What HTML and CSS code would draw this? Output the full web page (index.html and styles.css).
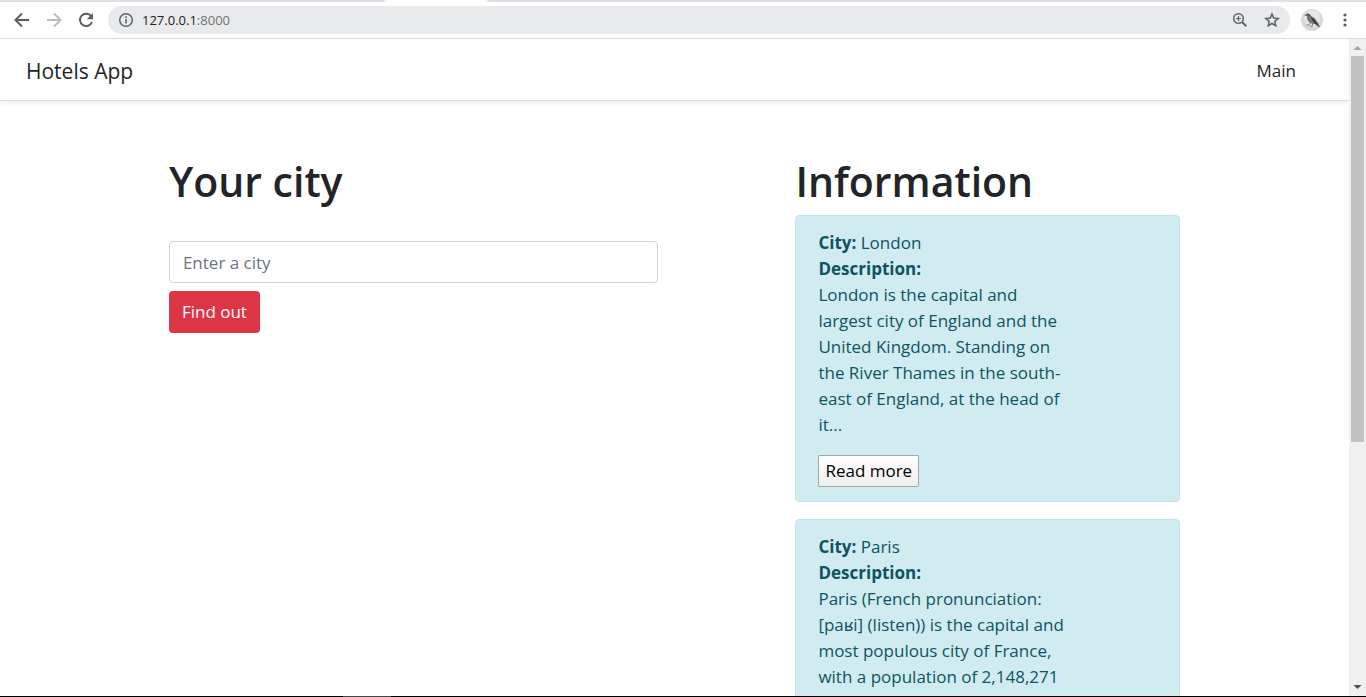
FILE: index.html
```html
<!DOCTYPE html>
<html lang="en">
<head>
<meta charset="utf-8">
<title>Hotels App</title>
<link rel="stylesheet" href="styles.css">
</head>
<body>
<div class="tabs"><span class="tab-rest tab-rest-left"></span><span class="tab-active"></span><span class="tab-rest tab-rest-right"></span></div>
<div class="toolbar">
  <button class="tool" aria-label="Back"><svg width="16" height="16" viewBox="0 0 16 16" fill="none" stroke="#5a5e63" stroke-width="2"><path d="M15 8H2M8 1.5 1.5 8 8 14.5"/></svg></button>
  <button class="tool" aria-label="Forward"><svg width="16" height="16" viewBox="0 0 16 16" fill="none" stroke="#babcbe" stroke-width="2"><path d="M1 8h13M8 1.5 14.5 8 8 14.5"/></svg></button>
  <button class="tool" aria-label="Reload"><svg width="16" height="16" viewBox="0 0 16 16"><path d="M13.2 4.2A6.2 6.2 0 1 0 14 10" fill="none" stroke="#5a5e63" stroke-width="2"/><path d="M15 1v6.2H8.8z" fill="#5a5e63"/></svg></button>
  <div class="address">
    <svg width="16" height="16" viewBox="0 0 16 16" fill="none" stroke="#5f6368"><circle cx="8" cy="8" r="6.3" stroke-width="1.5"/><path d="M8 7v4.5M8 4.2v1.7" stroke-width="1.6"/></svg>
    <span class="url">127.0.0.1<span class="port">:8000</span></span>
    <button class="tool" aria-label="Zoom"><svg width="16" height="16" viewBox="0 0 16 16" fill="none" stroke="#5f6368"><circle cx="6.5" cy="6.5" r="4.8" stroke-width="1.5"/><path d="m10 10 4.3 4.3" stroke-width="2"/><path d="M4 6.5h5M6.5 4v5" stroke-width="1.2"/></svg></button>
    <button class="tool" aria-label="Bookmark"><svg width="16" height="16" viewBox="0 0 16 16" fill="none" stroke="#5f6368" stroke-width="1.5"><path d="m8 2 1.7 4.1 4.5.4-3.4 2.9 1 4.4L8 11.5l-3.8 2.3 1-4.4-3.4-2.9 4.5-.4z"/></svg></button>
  </div>
  <button class="tool profile" aria-label="Profile"><svg width="22" height="22" viewBox="0 0 22 22"><circle cx="11" cy="11" r="11" fill="#d9d9d9"/><circle cx="11" cy="9" r="8" fill="#e6e6e6"/><path d="M2.800 6.200 5 5.200c.8-1.100 2.500-1.200 3.400-.2l1.600 1.800 3.600 2.400 3.200 4.200 2.400 4.600-1.400.2-3.400-3-2.400-.5-2.800-.8C7 12.500 5.700 10.500 5.900 7.200z" fill="#777"/><path d="m9.500 7.800 3.800 2.400 5 7.600-5-3.900z" fill="#333"/><path d="M5 5.600 8 5l1.500 2.200z" fill="#444"/><path d="m9.500 13.500-1.500 2.600H5.500m6.300-2-.6 3.200H9" fill="none" stroke="#666" stroke-width=".8"/></svg></button>
  <button class="tool menu" aria-label="Menu"><svg width="16" height="16" viewBox="0 0 16 16" fill="#5a5e63"><circle cx="8" cy="3" r="1.600"/><circle cx="8" cy="8" r="1.600"/><circle cx="8" cy="13" r="1.600"/></svg></button>
</div>
<div class="viewport">
  <div class="page">
    <header class="navbar">
      <a class="brand" href="#">Hotels App</a>
      <nav><a class="nav-link" href="#">Main</a></nav>
    </header>
    <main class="container">
      <section class="search">
        <h1>Your city</h1>
        <form>
          <input type="text" class="field" placeholder="Enter a city" aria-label="City">
          <button type="button" class="submit">Find out</button>
        </form>
      </section>
      <section class="info">
        <h1>Information</h1>
        <article class="card">
          <div class="card-text">
            <p><b>City:</b> London</p>
            <p><b>Description:</b></p>
            <p>London is the capital and largest city of England and the United Kingdom. Standing on the River Thames in the south-east of England, at the head of it...</p>
          </div>
          <button class="more">Read more</button>
        </article>
        <article class="card">
          <div class="card-text">
            <p><b>City:</b> Paris</p>
            <p><b>Description:</b></p>
            <p>Paris (French pronunciation: [paʁi] (listen)) is the capital and most populous city of France, with a population of 2,148,271 residents (official</p>
          </div>
        </article>
      </section>
    </main>
  </div>
  <div class="scrollbar">
    <svg width="17" height="17" viewBox="0 0 17 17"><path d="m4.500 11 4-4 4 4z" fill="#a3a3a3"/></svg>
    <div class="track"><div class="thumb"></div></div>
    <svg width="17" height="17" viewBox="0 0 17 17"><path d="m4.500 6 4 4 4-4z" fill="#505050"/></svg>
  </div>
</div>
<div class="taskbar"><span class="task"></span></div>
</body>
</html>
```
FILE: styles.css
```css
* { box-sizing: border-box; }
body {
  margin: 0;
  height: 100vh;
  display: flex;
  flex-direction: column;
  overflow: hidden;
  background: #fff;
  color: #212529;
  font: 17px/26px "Segoe UI", "Open Sans", "Noto Sans", sans-serif;
}
h1, p { margin: 0; }
a { color: inherit; text-decoration: none; }
button, input { font: inherit; margin: 0; }

.tabs { display: flex; flex: none; height: 2px; }
.tab-rest { background: #dee1e6; }
.tab-rest-left { width: 385px; border-bottom-right-radius: 2px; }
.tab-active { width: 102px; }
.tab-rest-right { flex: 1; border-bottom-left-radius: 2px; }

.toolbar {
  display: flex;
  flex: none;
  align-items: center;
  gap: 16px;
  height: 37px;
  padding: 0 13px 0 14px;
  border-bottom: 1px solid #d9dbdd;
}
.tool { display: flex; padding: 0; border: 0; background: none; }
.menu { margin-left: -2px; }
.profile { margin-left: -5px; }
.address {
  display: flex;
  flex: 1;
  align-items: center;
  gap: 16px;
  height: 28px;
  margin-left: -2px;
  padding: 0 10px;
  border-radius: 14px;
  background: #e9eaec;
}
.url { flex: 1; margin-left: -8px; color: #202124; font-size: 13px; }
.port { color: #6c7074; }

.viewport { display: flex; flex: 1; min-height: 0; }
.page { flex: 1; overflow: hidden; }
.navbar {
  display: flex;
  align-items: center;
  justify-content: space-between;
  height: 62px;
  padding: 2px 53px 0 26px;
  border-bottom: 1px solid #dadfe5;
  box-shadow: 0 2px 6px rgba(0, 0, 0, .08);
}
.brand { font-size: 21px; }

.container {
  display: grid;
  grid-template-columns: repeat(12, 1fr);
  gap: 33px;
  max-width: 1254px;
  margin: 0 auto;
  padding: 54px 17px;
}
.search { grid-column: 2 / span 5; }
.info { grid-column: 8 / span 4; }
h1 { margin-bottom: 8px; font-size: 41px; font-weight: 600; line-height: 52px; }
form { display: flex; flex-direction: column; align-items: flex-start; gap: 8px; padding-top: 26px; }
.field {
  width: 100%;
  height: 42px;
  padding: 0 13px;
  border: 1px solid #ced4da;
  border-radius: 4px;
  color: #495057;
}
.field::placeholder { color: #6c757d; }
.submit {
  height: 42px;
  padding: 0 13px;
  border: 0;
  border-radius: 4px;
  background: #dc3545;
  color: #fff;
}

.card {
  margin-bottom: 17px;
  padding: 14px 22px;
  border: 1px solid #bee5eb;
  border-radius: 4px;
  background: #d1ecf1;
  color: #0c5460;
}
.card-text { width: 74%; margin-bottom: 17px; }
.more {
  display: block;
  height: 32px;
  padding: 0 6px;
  border: 1px solid #a6a6a6;
  border-radius: 1px;
  background: linear-gradient(#fff, #eee);
  color: #000;
}

.scrollbar { display: flex; flex-direction: column; width: 17px; background: #f0f0f0; }
.track { flex: 1; padding: 0 2px; }
.thumb { height: 62%; background: #c1c1c1; }
.taskbar { flex: none; height: 1px; padding-left: 343px; background: #000; }
.task { display: block; width: 48px; height: 1px; background: #444; }
```
